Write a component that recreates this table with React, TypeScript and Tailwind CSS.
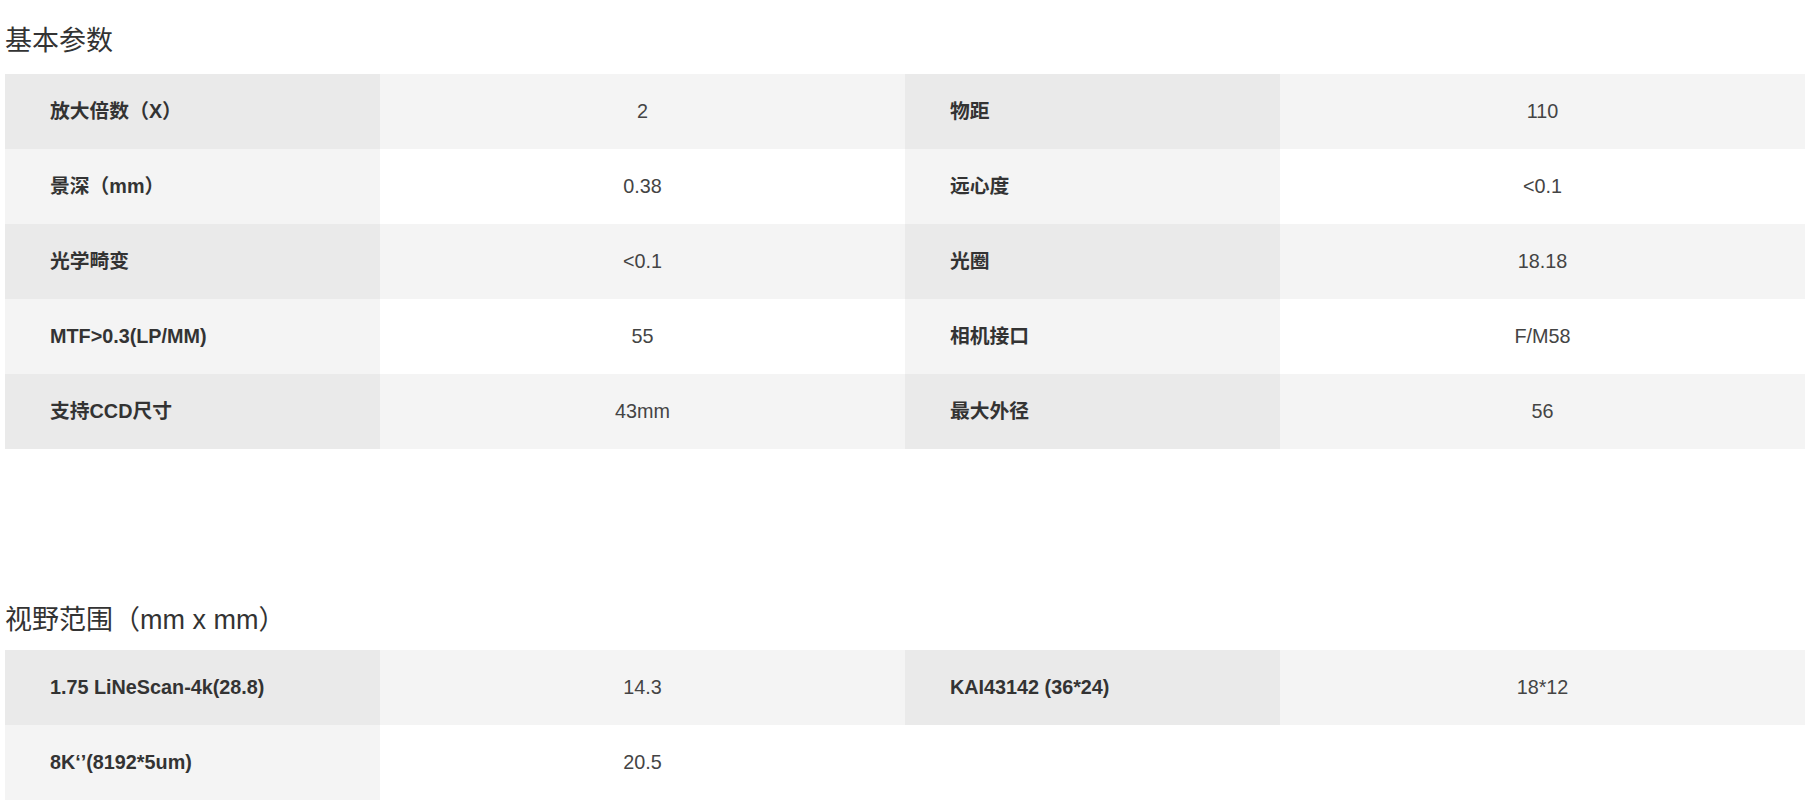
type Cell = { label: string; value: string };

const basic: Cell[][] = [
  [
    { label: "放大倍数（X）", value: "2" },
    { label: "物距", value: "110" },
  ],
  [
    { label: "景深（mm）", value: "0.38" },
    { label: "远心度", value: "<0.1" },
  ],
  [
    { label: "光学畸变", value: "<0.1" },
    { label: "光圈", value: "18.18" },
  ],
  [
    { label: "MTF>0.3(LP/MM)", value: "55" },
    { label: "相机接口", value: "F/M58" },
  ],
  [
    { label: "支持CCD尺寸", value: "43mm" },
    { label: "最大外径", value: "56" },
  ],
];

const fov: Cell[][] = [
  [
    { label: "1.75 LiNeScan-4k(28.8)", value: "14.3" },
    { label: "KAI43142 (36*24)", value: "18*12" },
  ],
  [{ label: "8K‘’(8192*5um)", value: "20.5" }],
];

function SpecTable({ rows }: { rows: Cell[][] }) {
  return (
    <div className="ml-[5px] mr-[4px]">
      {rows.map((row, i) => {
        const odd = i % 2 === 0;
        const labelBg = odd ? "bg-[#eaeaea]" : "bg-[#f4f4f4]";
        const valueBg = odd ? "bg-[#f4f4f4]" : "bg-white";
        return (
          <div
            key={i}
            className="grid h-[75px] grid-cols-[375px_525px_375px_1fr]"
          >
            {row.map((c, j) => (
              <div key={j} className="contents">
                <div
                  className={`${labelBg} flex items-center pl-[45px] text-[19.8px] font-bold text-[#333]`}
                >
                  {c.label}
                </div>
                <div
                  className={`${valueBg} flex items-center justify-center text-[19.8px] text-[#444]`}
                >
                  {c.value}
                </div>
              </div>
            ))}
          </div>
        );
      })}
    </div>
  );
}

export default function App() {
  return (
    <div
      className="min-h-screen bg-white pt-[21px]"
      style={{
        fontFamily:
          '"Liberation Sans", "Noto Sans CJK SC", Arial, sans-serif',
      }}
    >
      {/* 基本参数 */}
      <h2 className="ml-[5px] text-[27px] leading-[40px] font-normal text-[#333]">
        基本参数
      </h2>
      <div className="mt-[13px]">
        <SpecTable rows={basic} />
      </div>

      {/* 视野范围 */}
      <h2 className="mt-[151px] ml-[5px] text-[27px] leading-[40px] font-normal text-[#333]">
        视野范围（mm x mm）
      </h2>
      <div className="mt-[10px]">
        <SpecTable rows={fov} />
      </div>
    </div>
  );
}
